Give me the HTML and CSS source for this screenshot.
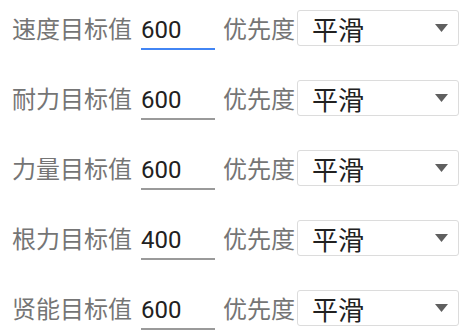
FILE: index.html
```
<!DOCTYPE html>
<html lang="zh-CN">
<head>
<meta charset="utf-8">
<title>目标值</title>
<link rel="stylesheet" href="styles.css">
</head>
<body>
<div class="form">
  <div class="row">
    <span class="label">速度目标值</span>
    <input class="num focused" type="text" value="600">
    <span class="label prio">优先度</span>
    <div class="select"><span class="sel-text">平滑</span><svg class="arrow" width="13" height="8" viewBox="0 0 13 8"><path d="M0 0H13L6.5 8Z" fill="#5f5f5f"/></svg></div>
  </div>
  <div class="row">
    <span class="label">耐力目标值</span>
    <input class="num" type="text" value="600">
    <span class="label prio">优先度</span>
    <div class="select"><span class="sel-text">平滑</span><svg class="arrow" width="13" height="8" viewBox="0 0 13 8"><path d="M0 0H13L6.5 8Z" fill="#5f5f5f"/></svg></div>
  </div>
  <div class="row">
    <span class="label">力量目标值</span>
    <input class="num" type="text" value="600">
    <span class="label prio">优先度</span>
    <div class="select"><span class="sel-text">平滑</span><svg class="arrow" width="13" height="8" viewBox="0 0 13 8"><path d="M0 0H13L6.5 8Z" fill="#5f5f5f"/></svg></div>
  </div>
  <div class="row">
    <span class="label">根力目标值</span>
    <input class="num" type="text" value="400">
    <span class="label prio">优先度</span>
    <div class="select"><span class="sel-text">平滑</span><svg class="arrow" width="13" height="8" viewBox="0 0 13 8"><path d="M0 0H13L6.5 8Z" fill="#5f5f5f"/></svg></div>
  </div>
  <div class="row">
    <span class="label">贤能目标值</span>
    <input class="num" type="text" value="600">
    <span class="label prio">优先度</span>
    <div class="select"><span class="sel-text">平滑</span><svg class="arrow" width="13" height="8" viewBox="0 0 13 8"><path d="M0 0H13L6.5 8Z" fill="#5f5f5f"/></svg></div>
  </div>
</div>
</body>
</html>
```
FILE: styles.css
```
html, body {
  margin: 0;
  padding: 0;
  background: #ffffff;
}
body {
  font-family: "Noto Sans CJK SC", "Noto Sans", sans-serif;
}
.form {
  padding: 10px 0 0 12px;
  display: flex;
  flex-direction: column;
  gap: 30px;
}
.row {
  display: flex;
  align-items: flex-start;
  height: 40px;
}
.label {
  font-size: 24px;
  line-height: 36px;
  color: #757575;
  white-space: nowrap;
}
.num {
  box-sizing: border-box;
  width: 74px;
  height: 40px;
  margin: 0 0 0 9px;
  padding: 2px 0 0 0;
  border: none;
  border-bottom: 2px solid #9a9a9a;
  outline: none;
  background: transparent;
  font-family: Roboto, "Noto Sans", sans-serif;
  font-size: 24px;
  line-height: 36px;
  color: #212121;
}
.num.focused {
  border-bottom-color: #4285f4;
}
.prio {
  margin-left: 8px;
}
.select {
  box-sizing: border-box;
  width: 162px;
  height: 36px;
  margin-left: 2px;
  border: 1px solid #dcdcdc;
  border-radius: 3px;
  background: #ffffff;
  display: flex;
  align-items: center;
  justify-content: space-between;
  padding: 0 10px 0 14px;
}
.sel-text {
  font-size: 26px;
  line-height: 34px;
  color: #212121;
  padding-top: 1px;
}
.arrow {
  display: block;
}
```
